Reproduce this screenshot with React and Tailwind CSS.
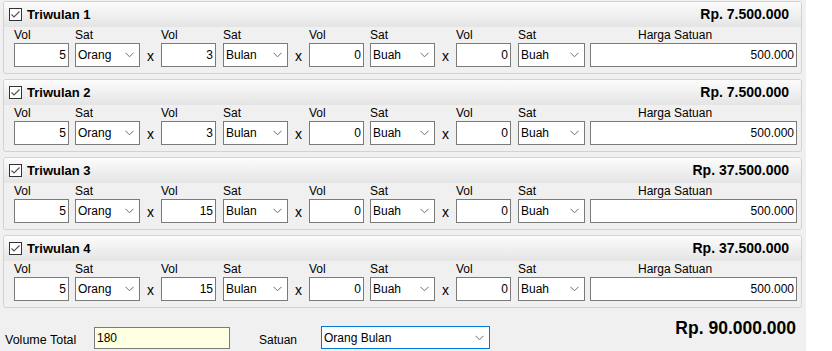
import React from 'react';

const panels = [
    { n: 1, total: 'Rp. 7.500.000', vol: ['5', '3', '0', '0'] },
    { n: 2, total: 'Rp. 7.500.000', vol: ['5', '3', '0', '0'] },
    { n: 3, total: 'Rp. 37.500.000', vol: ['5', '15', '0', '0'] },
    { n: 4, total: 'Rp. 37.500.000', vol: ['5', '15', '0', '0'] },
];
const sat = ['Orang', 'Bulan', 'Buah', 'Buah'];

const Chevron = () => (
    <svg width="9" height="6" viewBox="0 0 9 6" className="shrink-0">
        <path d="M0.5 0.8 L4.5 4.8 L8.5 0.8" fill="none" stroke="#6d6d6d" strokeWidth="1" />
    </svg>
);

const Check = () => (
    <svg width="13" height="13" viewBox="0 0 13 13" className="shrink-0">
        <rect x="0.5" y="0.5" width="12" height="12" fill="#fff" stroke="#333" />
        <path d="M2.5 6.5 L5 9 L10.5 3.5" fill="none" stroke="#555" strokeWidth="1.2" />
    </svg>
);

const Field = ({ label, children, className = '' }) => (
    <div className={`flex flex-col ${className}`}>
        <div className="h-[16px] leading-[16px] text-[12px]">{label}</div>
        {children}
    </div>
);

const Box = ({ value, w }) => (
    <div className={`h-[24px] ${w} bg-white border border-[#7a7a7a] flex items-center justify-end pr-[2px] text-[12px]`}>
        {value}
    </div>
);

const Select = ({ value, w }) => (
    <div className={`h-[24px] ${w} bg-white border border-[#7a7a7a] flex items-center justify-between pl-[2px] pr-[5px] text-[12px]`}>
        <span>{value}</span>
        <Chevron />
    </div>
);

const X = () => (
    <div className="w-[21px] flex items-end justify-center pb-[1px] text-[14px] leading-[20px] h-[40px]">x</div>
);

const Panel = ({ p }) => (
    <div className="w-[799px] h-[73px] rounded-[3px] border border-[#d2d2d2] overflow-hidden">
        <div className="h-[25px] flex items-center justify-between pl-[5px] pr-[12px] bg-gradient-to-b from-[#fcfcfc] to-[#e4e4e4]">
            <div className="flex items-center gap-[5px]">
                <Check />
                <span className="text-[13px] font-bold">Triwulan {p.n}</span>
            </div>
            <span className="text-[14px] font-bold">{p.total}</span>
        </div>
        <div className="flex pl-[10px]">
            {p.vol.map((v, i) => (
                <React.Fragment key={i}>
                    <Field label="Vol">
                        <Box value={v} w="w-[55px]" />
                    </Field>
                    <Field label="Sat" className={i === 1 || i === 3 ? 'ml-[7px]' : 'ml-[6px]'}>
                        <Select value={sat[i]} w={i === 3 ? 'w-[67px]' : 'w-[65px]'} />
                    </Field>
                    {i < 3 && <X />}
                </React.Fragment>
            ))}
            <Field label={<span className="pl-[48px]">Harga Satuan</span>} className="ml-[5px]">
                <Box value="500.000" w="w-[207px]" />
            </Field>
        </div>
    </div>
);

export default function App() {
    return (
        <div className="w-[806px] h-[351px] bg-[#f0f0f0] text-black overflow-hidden" style={{ fontFamily: '"Liberation Sans", Arial, sans-serif' }}>
            <div className="flex flex-col gap-[5px] pl-[3px] pt-[1px]">
                {panels.map(p => <Panel key={p.n} p={p} />)}
            </div>
            <div className="flex items-start justify-between pl-[5px] pr-[10px]">
                <div className="flex items-center mt-[18px] text-[12px]">
                    <span className="w-[89px] pt-[5px] text-[12.5px]">Volume Total</span>
                    <div className="w-[136px] h-[22px] bg-[#ffffe1] border border-[#7a7a7a] flex items-center pl-[2px]">180</div>
                    <span className="ml-[29px] w-[62px] pt-[5px]">Satuan</span>
                    <div className="w-[169px] h-[23px] bg-white border border-[#0078d7] flex items-center justify-between pl-[2px] pr-[5px]">
                        <span>Orang Bulan</span>
                        <Chevron />
                    </div>
                </div>
                <div className="mt-[10px] text-[17.5px] leading-[20px] font-bold">Rp. 90.000.000</div>
            </div>
        </div>
    );
}
